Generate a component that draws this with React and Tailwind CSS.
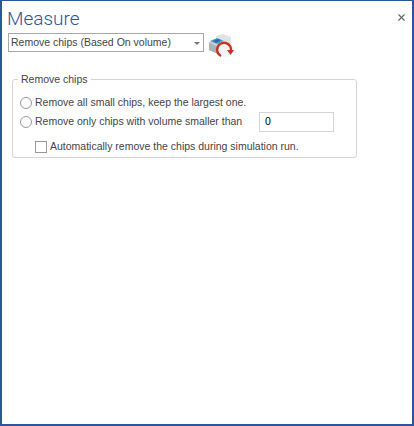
import { X } from 'lucide-react'

function Radio({ label }) {
  return (
    <label className="flex items-center gap-[3px]">
      <span className="w-3 h-3 rounded-full border border-[#999] bg-white shrink-0" />
      <span className="whitespace-nowrap">{label}</span>
    </label>
  )
}

function ChipsIcon() {
  return (
    <svg width="27" height="27" viewBox="0 0 27 27" className="shrink-0">
      {/* stack of chips */}
      <path d="M8 4l7-2 8 3v7l-8 4-7-4z" fill="#dfe3e6" />
      <path d="M1 10l8-3 9 3v7l-8 5-9-4z" fill="#c3c9ce" />
      <path d="M2 9l7-3 7 3-6 3z" fill="#4d97cc" />
      <path d="M1 11l9 4v7l-9-4z" fill="#aab1b8" />
      <path d="M5 9l5-2 3 1-5 3z" fill="#2a6c9e" />
      {/* red arrow */}
      <circle cx="17" cy="17" r="8" fill="#f4f5f6" />
      <path d="M13 24a7 7 0 1 1 10 -5" fill="none" stroke="#c8321f" strokeWidth="2.4" />
      <path d="M19 18h7l-3.5 5z" fill="#c8321f" />
    </svg>
  )
}

export default function App() {
  return (
    <div className="w-[414px] h-[426px] bg-white border-t border-b-2 border-l-2 border-r-2 border-[#2b579a] font-['Liberation_Sans',sans-serif] text-[10.5px] text-[#444] relative overflow-hidden">
      <X className="absolute top-[11px] right-[5px] w-[11px] h-[11px] text-[#666]" strokeWidth={2.5} />

      <div className="pl-[5px] pt-[6px] text-[19px] leading-[24px] font-light font-['Roboto',sans-serif] text-[#2b579a]">Measure</div>

      <div className="flex items-start gap-[4px] pl-[6px] pt-[1px]">
        <div className="w-[196px] h-[19px] border border-[#a8a8a8] flex items-center justify-between pl-[2px] pr-[2px] mt-[1px]">
          <span className="whitespace-nowrap">Remove chips (Based On volume)</span>
          <span className="w-0 h-0 border-l-[3px] border-r-[3px] border-t-[3px] border-l-transparent border-r-transparent border-t-[#777] mr-[1px] mt-[1px]" />
        </div>
        <ChipsIcon />
      </div>

      <fieldset className="ml-[10px] mt-[13px] w-[345px] h-[86px] border border-[#d5d5d5] rounded-[3px] pl-[7px]">
        <legend className="-ml-[2px] px-[3px] leading-[14px]">Remove chips</legend>
        <div className="flex flex-col pt-[9px]">
          <Radio label="Remove all small chips, keep the largest one." />
          <div className="flex items-center justify-between w-[314px] h-[20px] mt-[1px]">
            <Radio label="Remove only chips with volume smaller than" />
            <div className="w-[75px] h-[20px] border border-[#d5d5d5] flex items-center pl-[5px] text-black">0</div>
          </div>
          <label className="flex items-center gap-[3px] ml-[15px] mt-[7px]">
            <span className="w-3 h-3 border border-[#999] bg-white shrink-0" />
            <span className="whitespace-nowrap">Automatically remove the chips during simulation run.</span>
          </label>
        </div>
      </fieldset>
    </div>
  )
}
